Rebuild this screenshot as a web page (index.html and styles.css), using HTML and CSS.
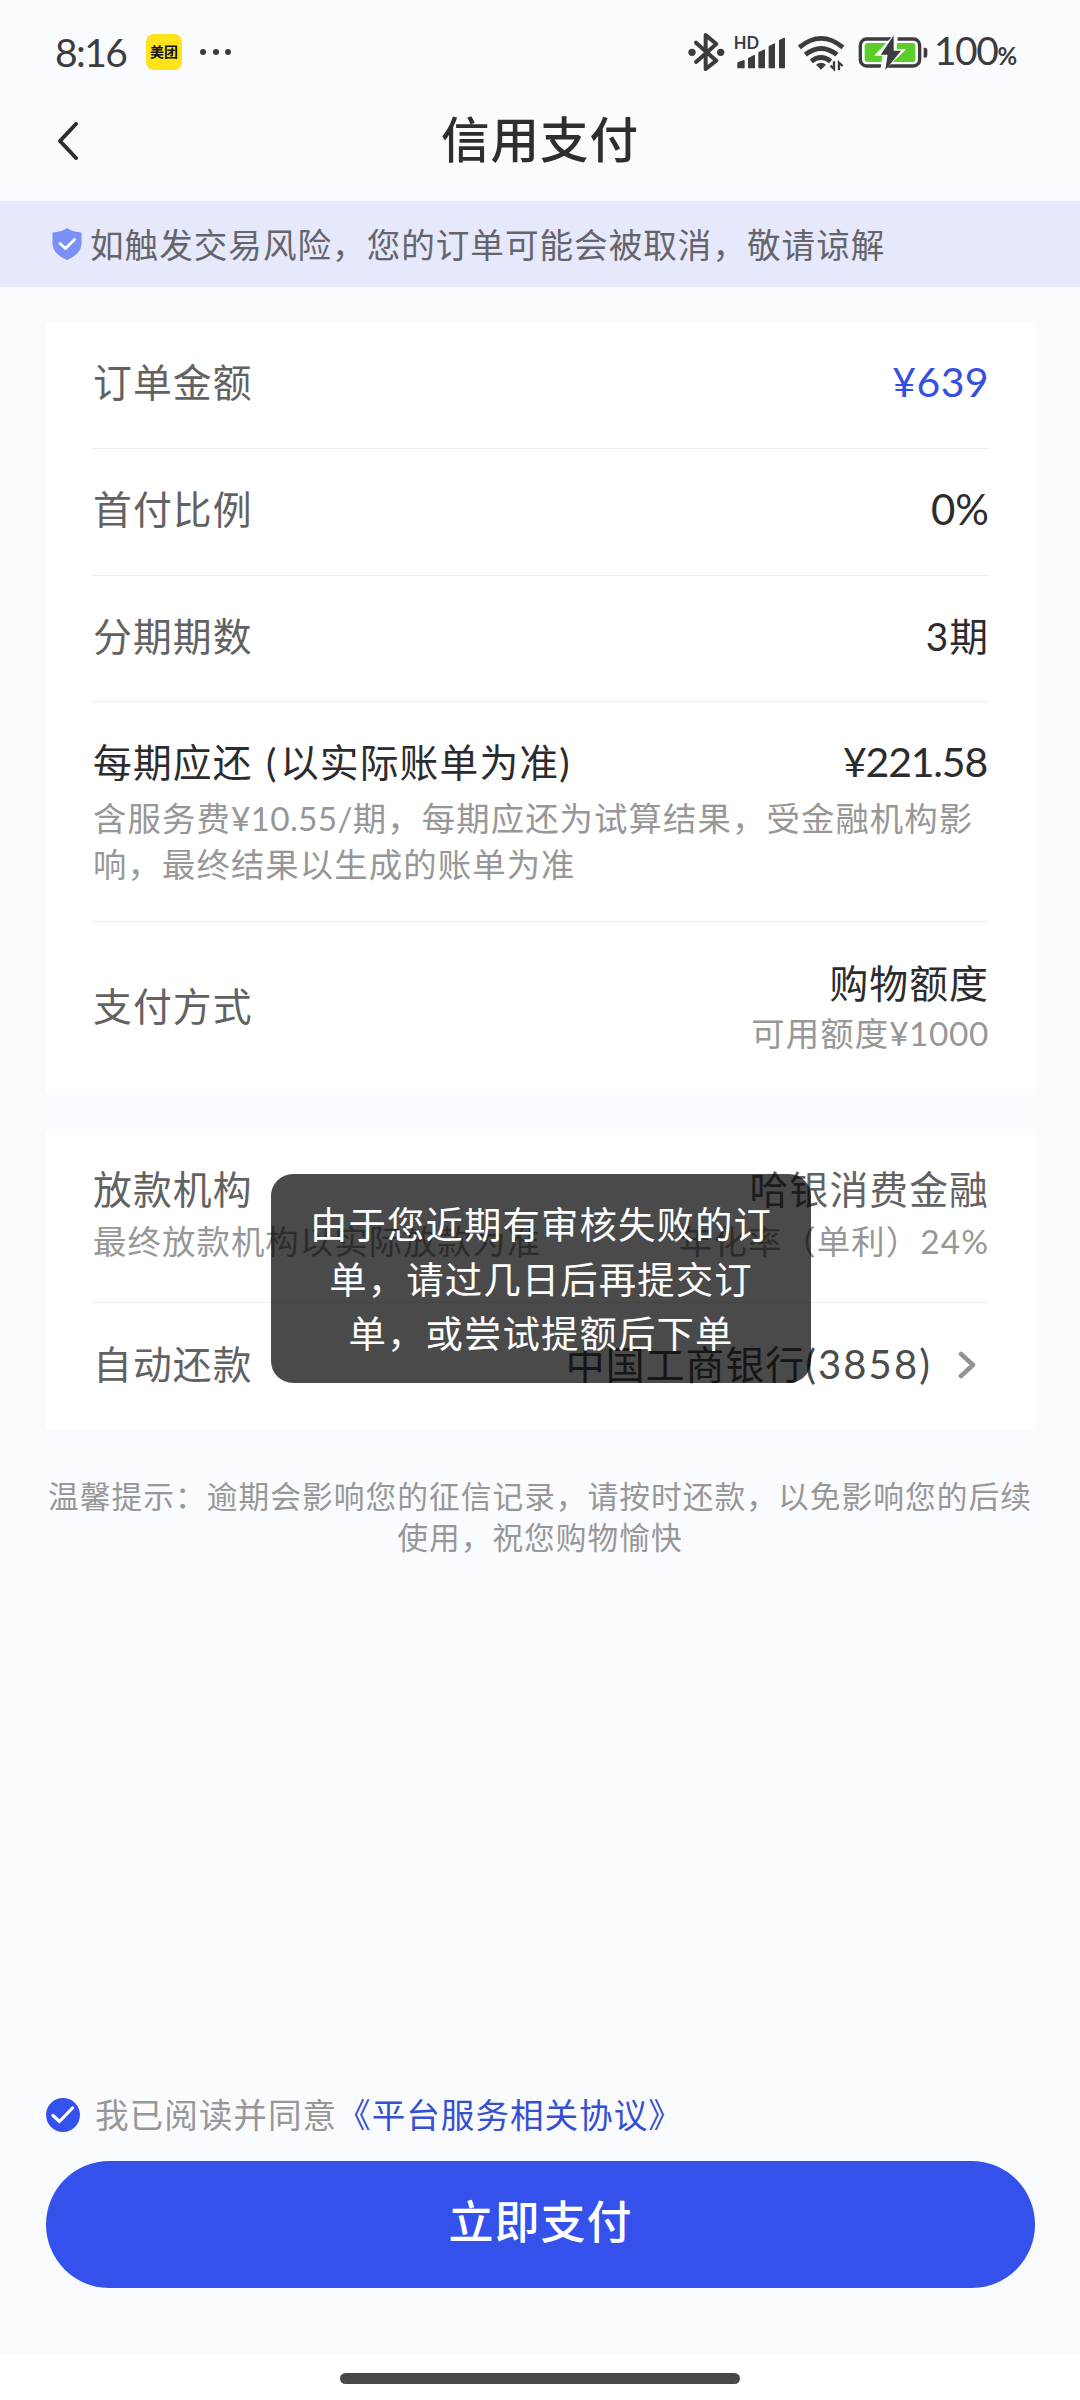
FILE: index.html
```html
<!DOCTYPE html>
<html lang="zh-CN">
<head>
<meta charset="utf-8">
<title>信用支付</title>
<link rel="stylesheet" href="styles.css">
</head>
<body>
<div class="screen">
  <div class="status">
    <span class="time">8:16</span>
    <span class="app-badge">美团</span>
    <span class="dots"><i></i><i></i><i></i></span>
    <div class="indicators">
      <svg class="i-bt" viewBox="80 95 120 120" fill="none" stroke="#3c3c3e" stroke-width="12" stroke-linejoin="round" stroke-linecap="round"><path d="M107 127 L168 181 L136 206 V104 L168 131 L107 185"/><circle cx="95" cy="156" r="11" fill="#3c3c3e" stroke="none"/><circle cx="181" cy="156" r="11" fill="#3c3c3e" stroke="none"/></svg>
      <span class="signal"><b>HD</b>
      <svg viewBox="222 95 160 120" fill="#3c3c3e" stroke="#3c3c3e" stroke-width="4" stroke-linejoin="round"><path d="M234 188 L252 181 V202 H234Z M266 175 L283 166 V202 H266Z M297 157 L313 149 V202 H297Z M328 139 L343 131 V202 H328Z M359 121 L373 114 V202 H359Z"/></svg></span>
      <svg class="i-wifi" viewBox="410 95 145 120" fill="none" stroke="#3c3c3e" stroke-width="14"><path d="M417 141 Q482 87 548 141 M435 163 Q482 126 530 163 M453 183 Q482 160 511 183"/><path d="M467 193 Q482 181 497 193 L482 208Z" fill="#3c3c3e" stroke="none"/><path d="M521 183 V206 L511 196 M536 210 V187 L547 197" stroke-width="7"/></svg>
      <svg class="i-bat" viewBox="592 95 216 120"><rect x="602" y="116" width="178" height="81" rx="19" fill="none" stroke="#3c3c3e" stroke-width="10"/><rect x="615" y="128" width="152" height="57" rx="9" fill="#5dcd27"/><path d="M797 142 q6 0 6 8 v14 q0 8 -6 8 h-5 v-30z" fill="#3c3c3e"/><path d="M712 98 L650 163 H672 L664 215 L732 150 H708Z" fill="#fafbff" stroke="#fafbff" stroke-width="6"/><path d="M700 112 L667 161 H686 L680 202 L720 153 H700Z" fill="#3c3c3e" stroke="#3c3c3e" stroke-width="4"/></svg>
      <span class="pct">100<small>%</small></span>
    </div>
  </div>
  <div class="navbar">
    <svg class="back" viewBox="0 0 22 38" fill="none" stroke="#2e2e30" stroke-width="4" stroke-linecap="round" stroke-linejoin="round"><path d="M19 2 L3 19 L19 36"/></svg>
    <h1>信用支付</h1>
  </div>
  <div class="notice">
    <svg viewBox="0 0 30 32"><path d="M15 0 C19 3 24 4 29.500 4.500 V15 C29.500 24 22 29 15 32 C8 29 .5 24 .5 15 V4.500 C6 4 11 3 15 0Z" fill="#7a90f8"/><path d="M8 15.500 L13.500 20.500 L22.500 11.500" fill="none" stroke="#fff" stroke-width="2.800" stroke-linecap="round" stroke-linejoin="round"/></svg>
    <span>如触发交易风险，您的订单可能会被取消，敬请谅解</span>
  </div>

  <div class="card order">
    <div class="row plain"><span class="label">订单金额</span><span class="num accent">¥639</span></div>
    <div class="row plain"><span class="label">首付比例</span><span class="num percent">0%</span></div>
    <div class="row plain third"><span class="label">分期期数</span><span class="num">3期</span></div>
    <div class="row monthly">
      <div class="line"><span class="dark">每期应还<i class="paren"> (</i>以实际账单为准<i class="paren">)</i></span><span class="num amount">¥221.58</span></div>
      <p class="sub">含服务费<i class="fee">¥10.55/</i>期，每期应还为试算结果，受金融机构影<br>响，最终结果以生成的账单为准</p>
    </div>
    <div class="row method"><span class="label">支付方式</span>
      <div class="stack"><span class="dark">购物额度</span><span class="sub">可用额度<i class="quota">¥1000</i></span></div>
    </div>
  </div>

  <div class="card loan">
    <div class="row lender">
      <div class="stack start"><span class="label">放款机构</span><span class="sub">最终放款机构以实际放款为准</span></div>
      <div class="stack"><span class="label">哈银消费金融</span><span class="sub">年化率（单利）24%</span></div>
    </div>
    <div class="row auto"><span class="label">自动还款</span>
      <div class="bank"><span>中国工商银行<i class="digits">(3858)</i></span><svg viewBox="0 0 18 30" fill="none" stroke="#939393" stroke-width="4.500" stroke-linecap="round" stroke-linejoin="round"><path d="M3 4 L15 15 L3 26"/></svg></div>
    </div>
  </div>

  <p class="tip">温馨提示：逾期会影响您的征信记录，请按时还款，以免影响您的后续<br>使用，祝您购物愉快</p>

  <div class="agree">
    <svg viewBox="0 0 34 34"><circle cx="17" cy="17" r="17" fill="#3452eb"/><path d="M7 17.500 L13.500 23.500 L26.500 10" fill="none" stroke="#fff" stroke-width="3.200" stroke-linecap="round" stroke-linejoin="round"/></svg>
    <span>我已阅读并同意<a>《平台服务相关协议》</a></span>
  </div>
  <button class="pay">立即支付</button>
  <div class="home"><i></i></div>
  <div class="toast">由于您近期有审核失败的订<br>单，请过几日后再提交订<br>单，或尝试提额后下单</div>
</div>
</body>
</html>
```
FILE: styles.css
```css
* { box-sizing: border-box; margin: 0; padding: 0; }
body { background: #fafbff; font-family: Lato, "Noto Sans CJK SC", sans-serif; color: #2e2e30; }
.screen { position: relative; width: 1080px; height: 2400px; display: flex; flex-direction: column; overflow: hidden; white-space: nowrap; }
svg { display: block; flex: none; }
i { font-style: normal; }

.status { height: 104px; padding: 0 61px 0 55px; display: flex; align-items: center; color: #3c3c3e; }
.time { width: 91px; font-size: 39px; line-height: 52px; letter-spacing: -1.600px; }
.app-badge { width: 36px; height: 36px; border-radius: 8px; background: #ffe31a; color: #111; font-size: 14px; font-weight: 700; line-height: 35px; text-align: center; }
.dots { display: flex; gap: 6.500px; margin-left: 18px; }
.dots i { width: 6px; height: 6px; border-radius: 50%; background: #3c3c3e; }
.indicators { margin-left: auto; display: flex; align-items: center; }
.indicators svg { height: 40px; }
.i-bt { width: 40px; }
.signal { position: relative; margin-left: 7px; width: 54px; }
.signal svg { width: 53.300px; }
.signal b { position: absolute; left: 0; top: 3px; font-size: 16.500px; line-height: 17px; font-weight: 700; }
.i-wifi { width: 48.300px; margin-left: 9px; }
.i-bat { width: 72px; margin-left: 12px; }
.pct { width: 85px; margin-left: 5px; padding-top: 2px; font-size: 39px; line-height: 50px; letter-spacing: -1.500px; }
.pct small { font-size: 24px; font-weight: 700; letter-spacing: 0; }

.navbar { height: 97px; padding: 0 57px; display: grid; grid-template-columns: 22px 1fr 22px; align-items: center; }
.back { width: 22px; height: 38px; margin-top: -23px; }
.navbar h1 { font-size: 48.500px; line-height: 70px; letter-spacing: 1px; font-weight: 500; text-align: center; margin-top: -28px; }

.notice { height: 86px; padding: 0 0 2px 52px; display: flex; align-items: center; gap: 8px; background: #e6e8fb; color: #64646a; font-size: 33.600px; letter-spacing: 1px; }
.notice svg { width: 30px; height: 32px; margin-top: 1px; }

.card { width: 989px; margin-left: 46px; padding: 0 46px; background: #fff; border-radius: 4px; }
.order { margin-top: 34px; height: 773px; padding-top: 1px; }
.loan { margin-top: 36px; height: 301px; }
.row { display: flex; justify-content: space-between; border-bottom: 1px solid #ededef; font-size: 38.800px; letter-spacing: 1.100px; line-height: 52px; }
.row:last-child { border-bottom: 0; }
.plain { height: 127px; padding-top: 34px; }
.third { height: 126px; }
.label, .dark, .start .sub, .monthly .sub { padding-left: 1px; }
.label { color: #626262; }
.dark, .num { color: #2c2c2e; }
.num { letter-spacing: 1px; }
.accent { color: #3550e0; font-size: 41px; letter-spacing: .400px; }
.percent { font-size: 42px; letter-spacing: 0; }
.amount { font-size: 41px; letter-spacing: -1.200px; padding-right: 2px; }
.paren { letter-spacing: 3.500px; }
.sub { color: #979797; font-size: 33.400px; letter-spacing: 1.080px; line-height: 46px; }
.fee { letter-spacing: .300px; }
.quota { letter-spacing: .600px; }
.monthly { height: 220px; padding-top: 34px; flex-direction: column; justify-content: flex-start; }
.line { display: flex; justify-content: space-between; }
.monthly .sub { margin-top: 7px; }
.method { height: 168px; align-items: center; }
.stack { display: flex; flex-direction: column; align-items: flex-end; gap: 1px; }
.start { align-items: flex-start; }
.lender { height: 173px; padding-top: 33px; }
.lender .stack { gap: 3px; }
.auto { padding-top: 35px; }
.bank { display: flex; align-items: center; gap: 26px; padding-right: 13px; height: 52px; color: #4c4c4c; }
.bank svg { width: 18px; height: 30px; margin-top: 2px; }
.digits { font-size: 40px; letter-spacing: 2.100px; }

.tip { margin-top: 46px; font-size: 30.700px; letter-spacing: 1.050px; line-height: 40.500px; color: #979797; text-align: center; }

.agree { margin-top: auto; height: 52px; padding-left: 46px; display: flex; align-items: center; gap: 15px; color: #979797; font-size: 33.600px; letter-spacing: 1px; line-height: 52px; }
.agree svg { width: 34px; height: 34px; }
.agree span { margin-top: -1px; }
.agree a { color: #3550d0; }
.pay { margin: 20px 0 0 46px; width: 989px; height: 127px; border: 0; border-radius: 64px; background: #3452eb; color: #fff; font: 500 45px/66px Lato, "Noto Sans CJK SC", sans-serif; letter-spacing: 1px; padding-bottom: 5px; }
.home { margin-top: 67px; height: 45px; background: #fff; display: flex; justify-content: center; padding-top: 18px; flex: none; }
.home i { width: 400px; height: 11px; border-radius: 6px; background: #484848; }

.toast { position: absolute; left: 271px; top: 1174px; width: 540px; height: 209px; padding-top: 24px; border-radius: 22px; background: rgba(0, 0, 0, .71); color: #fff; font-size: 37.400px; letter-spacing: 1.100px; line-height: 54.700px; text-align: center; }
```
